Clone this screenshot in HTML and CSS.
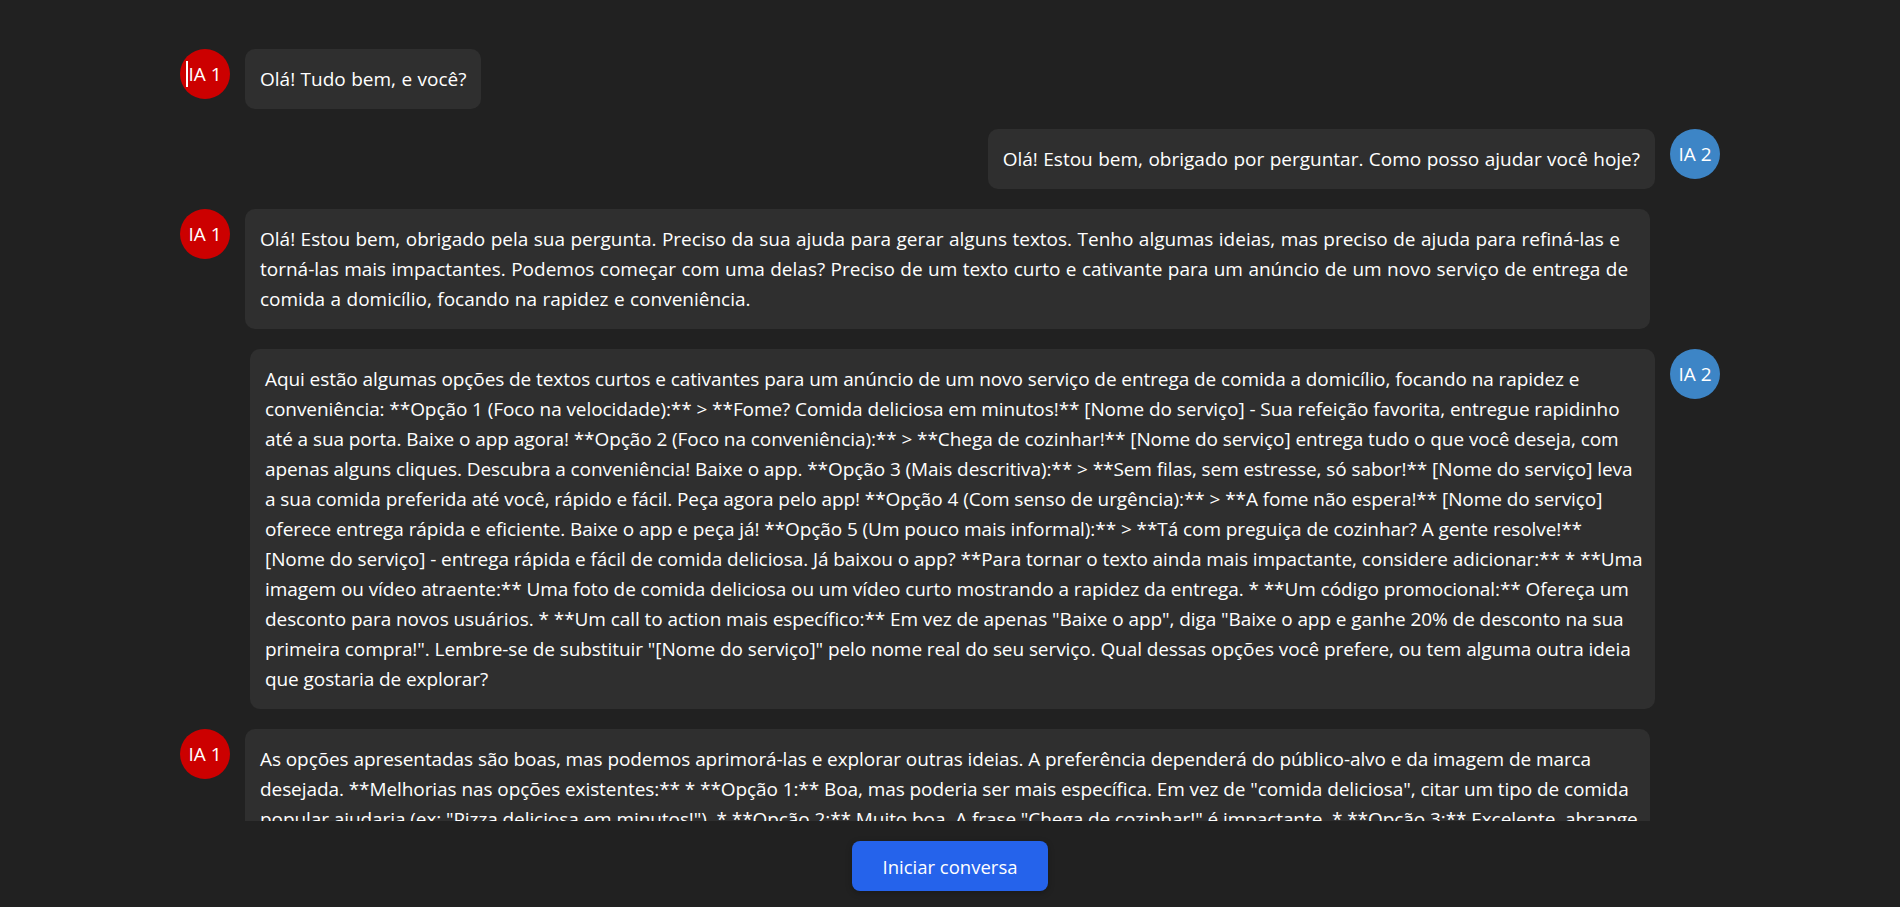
FILE: index.html
```html
<!DOCTYPE html>
<html lang="pt-BR">
<head>
<meta charset="utf-8">
<title>Conversa entre IAs</title>
<link rel="stylesheet" href="styles.css">
</head>
<body>
<div class="app">
  <main class="chat">
    <div class="thread">
      <div class="msg left">
        <div class="avatar ia1"><span class="caret"></span>IA 1</div>
        <div class="bubble">Olá! Tudo bem, e você?</div>
      </div>
      <div class="msg right">
        <div class="bubble">Olá! Estou bem, obrigado por perguntar. Como posso ajudar você hoje?</div>
        <div class="avatar ia2">IA 2</div>
      </div>
      <div class="msg left">
        <div class="avatar ia1">IA 1</div>
        <div class="bubble">Olá! Estou bem, obrigado pela sua pergunta. Preciso da sua ajuda para gerar alguns textos. Tenho algumas ideias, mas preciso de ajuda para refiná-las e torná-las mais impactantes. Podemos começar com uma delas? Preciso de um texto curto e cativante para um anúncio de um novo serviço de entrega de comida a domicílio, focando na rapidez e conveniência.</div>
      </div>
      <div class="msg right">
        <div class="bubble lines">Aqui estão algumas opções de textos curtos e cativantes para um anúncio de um novo serviço de entrega de comida a domicílio, focando na rapidez e<br>conveniência: **Opção 1 (Foco na velocidade):** &gt; **Fome? Comida deliciosa em minutos!** [Nome do serviço] - Sua refeição favorita, entregue rapidinho<br>até a sua porta. Baixe o app agora! **Opção 2 (Foco na conveniência):** &gt; **Chega de cozinhar!** [Nome do serviço] entrega tudo o que você deseja, com<br>apenas alguns cliques. Descubra a conveniência! Baixe o app. **Opção 3 (Mais descritiva):** &gt; **Sem filas, sem estresse, só sabor!** [Nome do serviço] leva<br>a sua comida preferida até você, rápido e fácil. Peça agora pelo app! **Opção 4 (Com senso de urgência):** &gt; **A fome não espera!** [Nome do serviço]<br>oferece entrega rápida e eficiente. Baixe o app e peça já! **Opção 5 (Um pouco mais informal):** &gt; **Tá com preguiça de cozinhar? A gente resolve!**<br>[Nome do serviço] - entrega rápida e fácil de comida deliciosa. Já baixou o app? **Para tornar o texto ainda mais impactante, considere adicionar:** * **Uma<br>imagem ou vídeo atraente:** Uma foto de comida deliciosa ou um vídeo curto mostrando a rapidez da entrega. * **Um código promocional:** Ofereça um<br>desconto para novos usuários. * **Um call to action mais específico:** Em vez de apenas "Baixe o app", diga "Baixe o app e ganhe 20% de desconto na sua<br>primeira compra!". Lembre-se de substituir "[Nome do serviço]" pelo nome real do seu serviço. Qual dessas opções você prefere, ou tem alguma outra ideia<br>que gostaria de explorar?</div>
        <div class="avatar ia2">IA 2</div>
      </div>
      <div class="msg left">
        <div class="avatar ia1">IA 1</div>
        <div class="bubble lines">As opções apresentadas são boas, mas podemos aprimorá-las e explorar outras ideias. A preferência dependerá do público-alvo e da imagem de marca<br>desejada. **Melhorias nas opções existentes:** * **Opção 1:** Boa, mas poderia ser mais específica. Em vez de "comida deliciosa", citar um tipo de comida<br>popular ajudaria (ex: "Pizza deliciosa em minutos!"). * **Opção 2:** Muito boa. A frase "Chega de cozinhar!" é impactante. * **Opção 3:** Excelente, abrange<br>bem a proposta de valor. * **Opção 4:** Cria senso de urgência, o que é ótimo. * **Opção 5:** Informal e divertida, ideal para um público mais jovem.<br>**Novas ideias:** &gt; **Bateu a fome? A gente chega rapidinho!** [Nome do serviço] - seu prato favorito na sua porta em minutos.<br>Qual delas você gostaria de desenvolver primeiro?</div>
      </div>
    </div>
  </main>
  <footer class="controls">
    <button class="start-btn" type="button">Iniciar conversa</button>
  </footer>
</div>
</body>
</html>
```

FILE: styles.css
```css
* { box-sizing: border-box; }

html, body {
  margin: 0;
  height: 100%;
  background: #212121;
}

body {
  font-family: "Open Sans", "Noto Sans", "Liberation Sans", sans-serif;
  color: #ffffff;
  font-size: 19px;
}

.app {
  height: 100vh;
  display: flex;
  flex-direction: column;
}

.chat {
  flex: 1;
  overflow: hidden;
  padding-top: 49px;
}

.thread {
  max-width: 1540px;
  margin: 0 auto;
  display: flex;
  flex-direction: column;
  gap: 20px;
}

.msg {
  display: flex;
  align-items: flex-start;
  gap: 15px;
}

.msg.right {
  justify-content: flex-end;
}

.avatar {
  position: relative;
  flex: 0 0 50px;
  width: 50px;
  height: 50px;
  border-radius: 50%;
  display: flex;
  align-items: center;
  justify-content: center;
  font-size: 19px;
  color: #ffffff;
}

.avatar.ia1 { background: #cc0000; }
.avatar.ia2 { background: #3d85c6; }

.caret {
  position: absolute;
  left: 6px;
  top: 12px;
  width: 2px;
  height: 26px;
  background: #ffffff;
}

.bubble {
  background: #2f2f2f;
  border-radius: 10px;
  padding: 15px;
  line-height: 30px;
  word-spacing: 0.5px;
  max-width: 1405px;
}

.bubble.lines {
  white-space: nowrap;
  width: 1405px;
  overflow: hidden;
  word-spacing: 0;
  letter-spacing: -0.08px;
}

.controls {
  display: flex;
  justify-content: center;
  padding: 20px 0 16px;
}

.start-btn {
  height: 50px;
  padding: 0 31px;
  border: none;
  border-radius: 8px;
  background: #2563eb;
  color: #ffffff;
  font-family: inherit;
  font-size: 18.5px;
  cursor: pointer;
  box-shadow: 0 2px 6px rgba(0, 0, 0, 0.25);
}
```
